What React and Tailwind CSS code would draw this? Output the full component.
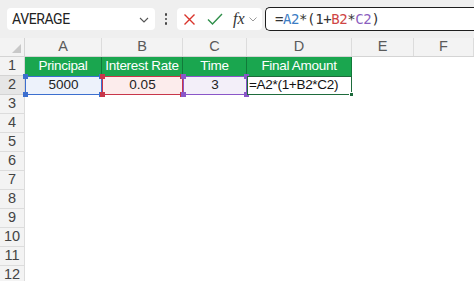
import React from "react";

const cols = [
  { key: "A", w: "w-[77px]" },
  { key: "B", w: "w-[81px]" },
  { key: "C", w: "w-[64px]" },
  { key: "D", w: "w-[105px]" },
  { key: "E", w: "w-[62px]" },
  { key: "F", w: "flex-1" },
];

const headers = ["Principal", "Interest Rate", "Time", "Final Amount"];

// colored range box with little corner squares
function RefBox({ border, handle }) {
  return (
    <div className={`absolute inset-0 border-[1.5px] ${border}`}>
      <div className={`absolute left-[-3px] top-[-3px] w-[5px] h-[5px] ${handle}`} />
      <div className={`absolute right-[-3px] top-[-3px] w-[5px] h-[5px] ${handle}`} />
      <div className={`absolute left-[-3px] bottom-[-3px] w-[5px] h-[5px] ${handle}`} />
      <div className={`absolute right-[-3px] bottom-[-3px] w-[5px] h-[5px] ${handle}`} />
    </div>
  );
}

function Toolbar() {
  return (
    <div className="h-[38px] bg-[#efefef] flex items-center pl-[7px]">
      {/* name box */}
      <div className="w-[148px] h-[22px] bg-white rounded-[4px] flex items-center justify-between pl-[5px] pr-[6px]">
        <span className="text-[14px] tracking-[-0.4px] text-[#222] font-['Roboto',sans-serif]">AVERAGE</span>
        <svg width="10" height="6" viewBox="0 0 10 6" className="mt-[2px]">
          <path d="M1 1l4 4 4-4" fill="none" stroke="#555" strokeWidth="1.1" />
        </svg>
      </div>
      {/* dots */}
      <div className="w-[22px] flex flex-col items-center gap-[2px]">
        <span className="w-[2.5px] h-[2.5px] rounded-full bg-[#444]" />
        <span className="w-[2.5px] h-[2.5px] rounded-full bg-[#444]" />
        <span className="w-[2.5px] h-[2.5px] rounded-full bg-[#444]" />
      </div>
      {/* cancel / enter / fx */}
      <div className="w-[85px] h-[22px] bg-white rounded-[4px] flex items-center pl-[6px]">
        <svg width="13" height="13" viewBox="0 0 13 13">
          <path d="M1.5 1.5l10 10M11.5 1.5l-10 10" stroke="#d9342b" strokeWidth="1.4" fill="none" />
        </svg>
        <svg width="16" height="12" viewBox="0 0 16 12" className="ml-[11px]">
          <path d="M1 6.5l4.5 4.5L15 1" stroke="#2f8f4a" strokeWidth="1.4" fill="none" />
        </svg>
        <span className="ml-[10px] text-[16px] italic text-[#333] font-['Liberation_Serif',serif] leading-none">
          fx
        </span>
        <svg width="8" height="5" viewBox="0 0 8 5" className="ml-[4px]">
          <path d="M0.5 0.5l3.5 3.5 3.5-3.5" fill="none" stroke="#999" strokeWidth="1" />
        </svg>
      </div>
      {/* formula input */}
      <div className="ml-[3px] flex-1 h-[24px] bg-white border-[1.5px] border-[#1e1e1e] border-r-0 rounded-l-[5px] flex items-center pl-[9px]">
        <span className="text-[14px] font-['DejaVu_Sans_Mono','Liberation_Mono',monospace] tracking-[-0.4px] text-[#333]">
          =<span className="text-[#3b7dc4]">A2</span>*(1+<span className="text-[#cf4545]">B2</span>*
          <span className="text-[#8b5fbf]">C2</span>)
        </span>
      </div>
    </div>
  );
}

export default function App() {
  const rowNums = [3, 4, 5, 6, 7, 8, 9, 10, 11, 12];
  const cellFont = "font-['Liberation_Sans',sans-serif] text-[13.5px]";
  const hdrFont = "font-['Liberation_Sans',sans-serif] text-[14.5px]";

  return (
    <div className="w-[474px] h-[281px] overflow-hidden bg-white">
      <Toolbar />

      {/* column header */}
      <div className="flex h-[19px] bg-[#f3f3f3] border-b border-[#d4d4d4]">
        <div className="w-[25px] relative border-r border-[#d4d4d4]">
          <div className="absolute right-[3px] bottom-[3px] w-0 h-0 border-l-[9px] border-l-transparent border-b-[9px] border-b-[#c8c8c8]" />
        </div>
        {cols.map((c) => (
          <div
            key={c.key}
            className={`${c.w} border-r border-[#dcdcdc] flex items-center justify-center text-[#5a5a5a] ${hdrFont}`}
          >
            {c.key}
          </div>
        ))}
      </div>

      {/* row 1 */}
      <div className="flex h-[19px]">
        <div className={`w-[25px] bg-[#f3f3f3] border-r border-b border-[#d4d4d4] flex items-center justify-center text-[#444] ${hdrFont}`}>
          1
        </div>
        {headers.map((h, i) => (
          <div
            key={h}
            className={`${cols[i].w} bg-[#1aa64f] border-r border-[#117a3a] flex items-center justify-center text-white ${cellFont} tracking-[-0.3px]`}
          >
            {h}
          </div>
        ))}
      </div>

      {/* row 2 */}
      <div className="flex h-[19px]">
        <div className={`w-[25px] bg-[#e6e6e6] border-r border-b border-[#d4d4d4] flex items-center justify-center text-[#444] ${hdrFont}`}>
          2
        </div>
        <div className={`w-[77px] relative bg-[#edf2fb] flex items-center justify-center text-[#222] ${cellFont}`}>
          5000
          <RefBox border="border-[#3c6fcf]" handle="bg-[#3c6fcf]" />
        </div>
        <div className={`w-[81px] relative bg-[#fcecec] flex items-center justify-center text-[#222] ${cellFont}`}>
          0.05
          <RefBox border="border-[#c8364a]" handle="bg-[#c8364a]" />
        </div>
        <div className={`w-[64px] relative bg-[#f3eff9] flex items-center justify-center text-[#222] ${cellFont}`}>
          3
          <RefBox border="border-[#8a56c8]" handle="bg-[#8a56c8]" />
        </div>
        <div className={`w-[105px] relative bg-white flex items-center pl-[2px] text-[#111] ${cellFont} tracking-[-0.3px]`}>
          =A2*(1+B2*C2)
          <div className="absolute inset-0 border-[1.5px] border-[#1e6b3c]">
            <div className="absolute right-[-3px] bottom-[-3px] w-[5px] h-[5px] bg-[#1e6b3c] border border-white" />
          </div>
        </div>
      </div>

      {/* empty rows */}
      {rowNums.map((n) => (
        <div key={n} className="flex h-[19px]">
          <div className={`w-[25px] bg-[#f3f3f3] border-r border-b border-[#dcdcdc] flex items-center justify-center text-[#444] ${hdrFont}`}>
            {n}
          </div>
        </div>
      ))}
    </div>
  );
}
